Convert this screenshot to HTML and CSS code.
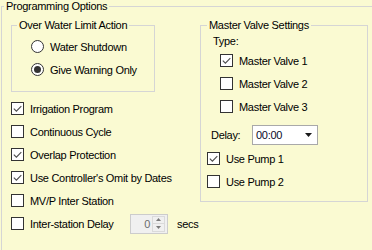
FILE: index.html
```html
<!DOCTYPE html>
<html>
<head>
<meta charset="utf-8">
<link rel="stylesheet" href="styles.css">
</head>
<body>
<fieldset class="group outer">
  <legend class="legend legend-outer">Programming Options</legend>
  <div class="cols">
    <div class="left">
      <fieldset class="group water">
        <legend class="legend legend-water">Over Water Limit Action</legend>
        <div class="water-body">
          <div class="row"><span class="radio"></span><span>Water Shutdown</span></div>
          <div class="row"><span class="radio on"></span><span>Give Warning Only</span></div>
        </div>
      </fieldset>
      <div class="checks">
        <div class="row"><span class="cb"><svg viewBox="0 0 11 11" width="11" height="11"><path d="M1.8 5.6 L4.4 8.2 L9.3 3.2" fill="none" stroke="#4d4d4d" stroke-width="1.1"/></svg></span><span>Irrigation Program</span></div>
        <div class="row"><span class="cb"></span><span>Continuous Cycle</span></div>
        <div class="row"><span class="cb"><svg viewBox="0 0 11 11" width="11" height="11"><path d="M1.8 5.6 L4.4 8.2 L9.3 3.2" fill="none" stroke="#4d4d4d" stroke-width="1.1"/></svg></span><span>Overlap Protection</span></div>
        <div class="row"><span class="cb"><svg viewBox="0 0 11 11" width="11" height="11"><path d="M1.8 5.6 L4.4 8.2 L9.3 3.2" fill="none" stroke="#4d4d4d" stroke-width="1.1"/></svg></span><span>Use Controller's Omit by Dates</span></div>
        <div class="row"><span class="cb"></span><span>MV/P Inter Station</span></div>
        <div class="row">
          <span class="cb"></span><span class="delay-label">Inter-station Delay</span>
          <div class="spin">
            <span class="spin-val">0</span>
            <span class="spin-btns">
              <span class="spin-btn"><svg viewBox="0 0 5 3" width="5" height="3"><path d="M0 3 L2.5 0 L5 3 Z" fill="#7a7a7a"/></svg></span>
              <span class="spin-btn"><svg viewBox="0 0 5 3" width="5" height="3"><path d="M0 0 L2.5 3 L5 0 Z" fill="#7a7a7a"/></svg></span>
            </span>
          </div>
          <span class="secs">secs</span>
        </div>
      </div>
    </div>
    <fieldset class="group mv">
      <legend class="legend legend-mv">Master Valve Settings</legend>
      <div class="mv-body">
        <div class="type">Type:</div>
        <div class="row mv-row"><span class="cb"><svg viewBox="0 0 11 11" width="11" height="11"><path d="M1.8 5.6 L4.4 8.2 L9.3 3.2" fill="none" stroke="#4d4d4d" stroke-width="1.1"/></svg></span><span>Master Valve 1</span></div>
        <div class="row mv-row"><span class="cb"></span><span>Master Valve 2</span></div>
        <div class="row mv-row"><span class="cb"></span><span>Master Valve 3</span></div>
        <div class="delay-row">
          <span class="delay-text">Delay:</span>
          <div class="dropdown"><span>00:00</span><svg class="arrow" viewBox="0 0 7 4" width="7" height="4"><path d="M0 0 L7 0 L3.5 4 Z" fill="#1a1a1a"/></svg></div>
        </div>
        <div class="row pump-row first"><span class="cb"><svg viewBox="0 0 11 11" width="11" height="11"><path d="M1.8 5.6 L4.4 8.2 L9.3 3.2" fill="none" stroke="#4d4d4d" stroke-width="1.1"/></svg></span><span>Use Pump 1</span></div>
        <div class="row pump-row"><span class="cb"></span><span>Use Pump 2</span></div>
      </div>
    </fieldset>
  </div>
</fieldset>
</body>
</html>
```

FILE: styles.css
```css
html, body {
  margin: 0;
  padding: 0;
  overflow: hidden;
}
body {
  width: 372px;
  height: 250px;
  background: #FAFAD2;
  font-family: "Liberation Sans", Arial, sans-serif;
  font-size: 11px;
  letter-spacing: -0.3px;
  color: #000;
}
.group {
  margin: 0;
  padding: 0;
  border: 1px solid #d5d5d5;
  min-width: 0;
}
.legend {
  padding: 0 2px;
  line-height: 13px;
  height: 13px;
}
.outer {
  margin-left: 1px;
  border-right: none;
  border-bottom: none;
  height: 250px;
  box-sizing: border-box;
  padding-top: 6px;
}
.legend-outer { margin-left: 2px; }
.legend-water { margin-left: 5px; }
.legend-mv { margin-left: 6px; }
.cols {
  display: flex;
  align-items: flex-start;
}
.left {
  margin-left: 9px;
  width: 144px;
  flex: none;
}
.water-body {
  padding: 3px 0 10px 19px;
}
.row {
  height: 23px;
  display: flex;
  align-items: center;
  white-space: nowrap;
}
.radio {
  width: 13px;
  height: 13px;
  box-sizing: border-box;
  border: 1px solid #333;
  border-radius: 50%;
  background: #fff;
  margin-right: 6px;
  flex: none;
  display: flex;
  align-items: center;
  justify-content: center;
}
.radio.on::after {
  content: "";
  width: 7px;
  height: 7px;
  border-radius: 50%;
  background: #333;
}
.checks {
  margin-top: 5px;
}
.cb {
  width: 13px;
  height: 13px;
  box-sizing: border-box;
  border: 1px solid #333;
  background: #fff;
  margin-right: 6px;
  flex: none;
  display: flex;
  align-items: center;
  justify-content: center;
}
.cb svg { display: block; }
.delay-label {
  width: 100px;
  flex: none;
}
.spin {
  width: 38px;
  height: 20px;
  box-sizing: border-box;
  border: 1px solid #cccccc;
  background: #f0f0f0;
  display: flex;
  flex: none;
}
.spin-val {
  flex: 1;
  text-align: right;
  color: #6d6d6d;
  line-height: 18px;
  padding-right: 2px;
}
.spin-btns {
  width: 13px;
  margin: 1px 2px 1px 0;
  display: flex;
  flex-direction: column;
  border: 1px solid #dadada;
  box-sizing: border-box;
}
.spin-btn {
  flex: 1;
  display: flex;
  align-items: center;
  justify-content: center;
}
.spin-btn + .spin-btn {
  border-top: 1px solid #dadada;
}
.spin-btn svg { display: block; }
.secs {
  margin-left: 9px;
}
.mv {
  margin-left: 45px;
  width: 168px;
  box-sizing: border-box;
  flex: none;
}
.mv-body {
  height: 166px;
  box-sizing: border-box;
}
.type {
  margin: 3px 0 1px 12px;
  line-height: 13px;
}
.mv-row {
  margin-left: 19px;
}
.delay-row {
  margin: 7px 0 0 10px;
  height: 20px;
  display: flex;
  align-items: center;
}
.delay-text {
  width: 41px;
  flex: none;
}
.dropdown {
  width: 66px;
  height: 20px;
  box-sizing: border-box;
  border: 1px solid #a9a9a9;
  background: #fff;
  display: flex;
  align-items: center;
  padding-left: 3px;
  color: #0a0a28;
}
.dropdown .arrow {
  margin-left: auto;
  margin-right: 5px;
  display: block;
}
.pump-row {
  margin-left: 6px;
}
.pump-row.first {
  margin-top: 2px;
}
```
